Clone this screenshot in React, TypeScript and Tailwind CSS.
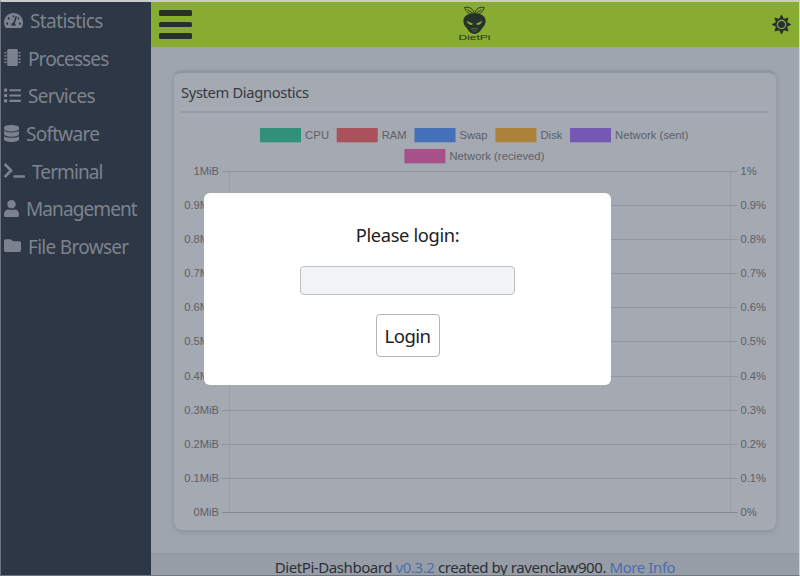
import React from "react";
import {
  FaTachometerAlt,
  FaMicrochip,
  FaList,
  FaDatabase,
  FaTerminal,
  FaUser,
  FaFolder,
  FaSun,
} from "react-icons/fa";

const nav = [
  { label: "Statistics", Icon: FaTachometerAlt, icon: "w-[19px]", tracking: "tracking-[-0.6px]" },
  { label: "Processes", Icon: FaMicrochip, icon: "w-[17px]", tracking: "tracking-[-0.88px]" },
  { label: "Services", Icon: FaList, icon: "w-[17px]", tracking: "tracking-[-0.7px]" },
  { label: "Software", Icon: FaDatabase, icon: "w-[15px]", tracking: "tracking-[-0.75px]" },
  { label: "Terminal", Icon: FaTerminal, icon: "w-[21px]", tracking: "tracking-[-0.9px]" },
  { label: "Management", Icon: FaUser, icon: "w-[15px]", tracking: "tracking-[-0.9px]" },
  { label: "File Browser", Icon: FaFolder, icon: "w-[17px]", tracking: "tracking-[-0.7px]" },
];

const legend = [
  { x: 260, y: 128, color: "#309079", label: "CPU", w: 24 },
  { x: 336.7, y: 128, color: "#aa525b", label: "RAM", w: 25 },
  { x: 414.5, y: 128, color: "#4471b8", label: "Swap", w: 28 },
  { x: 495.4, y: 128, color: "#ac823b", label: "Disk", w: 22 },
  { x: 570, y: 128, color: "#7459b3", label: "Network (sent)", w: 73.5 },
  { x: 404.4, y: 149, color: "#a65288", label: "Network (recieved)", w: 95 },
];

const ticks = ["1", "0.9", "0.8", "0.7", "0.6", "0.5", "0.4", "0.3", "0.2", "0.1", "0"];

function Chart() {
  return (
    <svg
      viewBox="181 113 587 413"
      className="block h-[413px] w-[587px] font-['Liberation_Sans',Arial,sans-serif] text-[11.2px]"
    >
      {legend.map((l) => (
        <g key={l.label}>
          <rect x={l.x} y={l.y} width="41" height="14.3" fill={l.color} />
          <text x={l.x + 45} y={l.y + 10.5} textLength={l.w} fill="#5c6068">
            {l.label}
          </text>
        </g>
      ))}
      <path d="M229.5 171V513M730.5 171V513" stroke="#989ca5" strokeWidth="1" />
      {ticks.map((t, i) => {
        const y = 171 + i * 34.18;
        return (
          <g key={t}>
            <path d={`M222 ${Math.floor(y) + 0.5}H737.5`} stroke={i === 10 ? "#858992" : "#91959e"} />
            <text x="219" y={y + 3.5} textAnchor="end" fill="#5c6068">
              {t}MiB
            </text>
            <text x="740.5" y={y + 3.5} fill="#5c6068">
              {t}%
            </text>
          </g>
        );
      })}
    </svg>
  );
}

function Logo() {
  return (
    <svg viewBox="0 0 34 36" className="mr-[14px] mb-[3px] h-[36px] w-[34px]">
      <g fill="none" stroke="#27331f" strokeWidth="1">
        <path d="M16.500 9.500C11.500 10 8 7 6.700 2.500C11.500 1.500 15.500 3.500 16.500 9.500ZM16.500 9.500C21.500 10 25 7 26.300 2.500C21.500 1.500 17.500 3.500 16.500 9.500ZM9.500 4.500L16.500 9.500L23.500 4.500" />
      </g>
      <path
        fill="#27312c"
        d="M16.500 8.500C22 7.900 27 10.500 27.600 15C28 18.500 26 21.500 23.500 24C22 27 19.500 28.700 16.500 29C13.500 28.700 11 27 9.500 24C7 21.500 5 18.500 5.400 15C6 10.500 11 7.900 16.500 8.500Z"
      />
      <path fill="#88ab32" d="M8.700 15.700L15 18.800C14.500 20.800 10.200 20.500 8.700 15.700ZM24.300 15.700L18 18.800C18.500 20.800 22.800 20.500 24.300 15.700Z" />
      <path d="M12.800 24.100Q16.500 22.700 20.200 24.100M14.500 26H18.500" fill="none" stroke="#71902f" strokeWidth=".7" />
      <text
        x="0.500"
        y="34.800"
        textLength="32"
        lengthAdjust="spacingAndGlyphs"
        fill="#27331f"
        className="font-['Liberation_Sans',Arial,sans-serif] text-[8px]"
      >
        DietPi
      </text>
    </svg>
  );
}

export default function App() {
  return (
    <div className="relative flex h-[576px] w-[800px] overflow-hidden border-t-2 border-r border-b border-l border-t-[#c9cbcd] border-r-[#d2d4d6] border-b-[#70757d] border-l-[#6d747e] bg-[#9fa5ae] font-['Noto_Sans','Open_Sans',sans-serif]">
      <aside className="w-[150px] shrink-0 bg-[#2e3745] pl-[3px] text-[#7c838e]">
        {nav.map(({ label, Icon, icon, tracking }) => (
          <a key={label} className="flex h-[37.600px] items-center whitespace-nowrap">
            <Icon className={`${icon} mb-[1px] h-[17px] shrink-0`} />
            <span className={`ml-[7px] pt-[2px] ${tracking} text-[19px] leading-[35px]`}>{label}</span>
          </a>
        ))}
      </aside>
      <div className="flex min-w-0 flex-1 flex-col">
        <header className="flex h-[45px] shrink-0 items-center justify-between bg-[#88ab32] pr-[8px] pl-[7.500px]">
          <button className="flex w-[33px] flex-col gap-[6.300px]" aria-label="Toggle menu">
            <span className="h-[5.300px] rounded-[1.500px] bg-[#27302f]" />
            <span className="h-[5.300px] rounded-[1.500px] bg-[#27302f]" />
            <span className="h-[5.300px] rounded-[1.500px] bg-[#27302f]" />
          </button>
          <Logo />
          <FaSun className="size-[19px] text-[#27302f]" />
        </header>
        <main className="flex-1 px-[23px] pt-[23px]">
          <section className="h-[460px] w-[602px] rounded-[8px] border-t-[3px] border-[#91959f] bg-[#a5a9b1] px-[7px] shadow-[0_2px_5px_#8b919b]">
            <h2 className="h-[40px] border-b-2 border-[#989ca9] pt-[2px] text-[14.700px] leading-[35px] tracking-[-0.33px] text-[#343941]">
              System Diagnostics
            </h2>
            <Chart />
          </section>
        </main>
        <footer className="h-[22px] shrink-0 border-t border-[#9096a0] bg-[#979da7] pt-[5px] text-center text-[15px] leading-[16px] tracking-[-0.42px] whitespace-nowrap text-[#2b3038]">
          DietPi-Dashboard <a className="text-[#4b6dac]">v0.3.2</a> created by ravenclaw900. <a className="text-[#4b6dac]">More Info</a>
        </footer>
      </div>
      <div
        role="dialog"
        className="absolute top-[191px] left-[203px] flex h-[192px] w-[407px] flex-col items-center rounded-[6px] bg-white text-[#202124]"
      >
        <p className="mt-[28px] text-[18.300px] leading-[28px] tracking-[-0.35px]">Please login:</p>
        <input
          type="password"
          aria-label="Password"
          className="mt-[17px] h-[29px] w-[215px] rounded-[4px] border border-[#bfc2c6] bg-[#f2f3f5] px-2"
        />
        <button className="mt-[19px] h-[43px] w-[64px] rounded-[4px] border border-[#b5b5b5] text-[18.600px] leading-[42px] tracking-[-0.55px]">
          Login
        </button>
      </div>
    </div>
  );
}
